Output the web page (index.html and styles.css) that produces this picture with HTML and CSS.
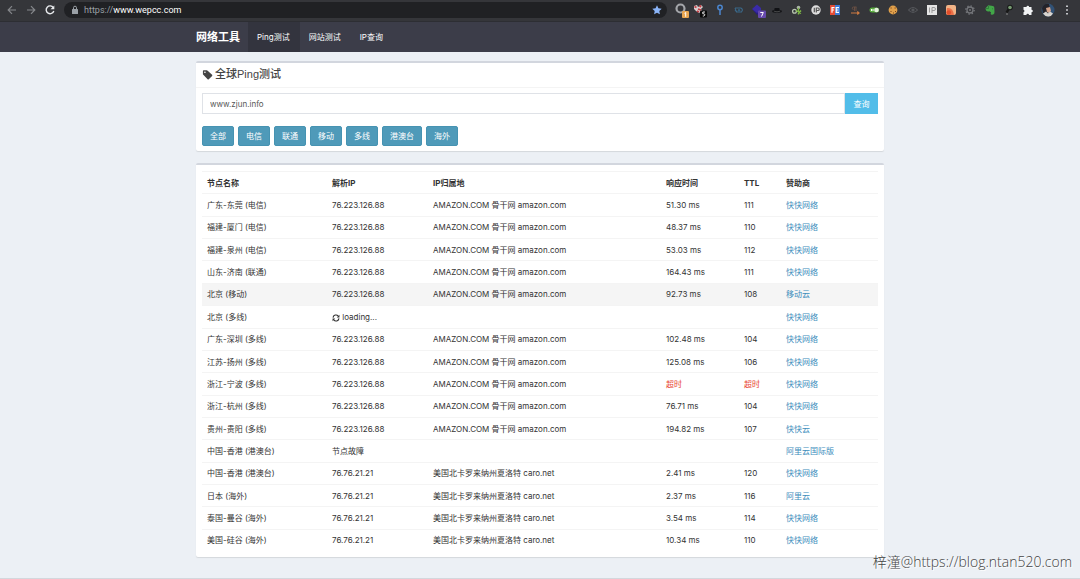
FILE: index.html
```html
<!DOCTYPE html>
<html lang="zh-CN">
<head>
<meta charset="utf-8">
<meta name="viewport" content="width=device-width, initial-scale=1">
<title>全球Ping测试</title>
<link rel="stylesheet" href="styles.css">
</head>
<body>
<div class="browser">
  <div class="browser-nav">
    <button class="tool" aria-label="后退"><svg viewBox="0 0 16 16" class="ico dim"><path d="M12 8H4.500M8 4.200L4.200 8L8 11.800" fill="none" stroke="currentColor" stroke-width="1.200"/></svg></button>
    <button class="tool" aria-label="前进"><svg viewBox="0 0 16 16" class="ico dim"><path d="M4 8h7.500M8 4.200L11.800 8L8 11.800" fill="none" stroke="currentColor" stroke-width="1.200"/></svg></button>
    <button class="tool" aria-label="刷新"><svg viewBox="0 0 16 16" class="ico"><path d="M11.300 5.600A3.900 3.900 0 1 0 11.800 9" fill="none" stroke="currentColor" stroke-width="1.400"/><path d="M12.300 3.500V7.300H8.500z" fill="currentColor"/></svg></button>
  </div>
  <div class="address">
    <svg viewBox="0 0 8 10" class="lock"><rect x="1" y="4" width="6" height="5" rx=".6" fill="currentColor"/><path d="M2.500 4V2.700a1.500 1.500 0 0 1 3 0V4" fill="none" stroke="currentColor"/></svg>
    <span class="url"><span class="scheme">https://</span>www.wepcc.com</span>
    <svg viewBox="0 0 16 16" class="ico star"><path d="M8 3.300l1.400 3 3.300.4-2.400 2.300.6 3.300L8 10.700l-2.900 1.600.6-3.300L3.300 6.700l3.300-.4z" fill="currentColor"/></svg>
  </div>
  <div class="extensions">
    <svg viewBox="0 0 16 16" class="ico"><circle cx="7.500" cy="6.500" r="4" fill="none" stroke="#a4a6aa" stroke-width="2.200"/><rect x="9" y="9" width="7" height="7" rx="1" fill="#e8a550"/><path d="M12.700 14.800v-4.300l-1.200.8" stroke="#fff" fill="none"/></svg>
    <svg viewBox="0 0 16 16" class="ico"><path d="M2 4l3-1 1 2 3-2 2 2-2 2 1 2-3 2-3-2-2-2z" fill="#d8cfd0"/><path d="M2.500 4.500l2 1M6 7l3 1M7.500 3.500L9 5M5 9l2 1" stroke="#c33c43" stroke-width="1.800"/><rect x="8" y="8.500" width="7" height="7" rx="1" fill="#080808"/><path d="M13 10h-2.200v1.800h1q1 .2 1 1t-1 1.200h-1" fill="none" stroke="#fff" stroke-width=".9"/></svg>
    <svg viewBox="0 0 16 16" class="ico"><circle cx="8" cy="5.500" r="2.200" fill="none" stroke="#4b86cf" stroke-width="1.500"/><path d="M8 7.500v5.500" stroke="#4b86cf" stroke-width="1.500"/></svg>
    <svg viewBox="0 0 16 16" class="ico"><path d="M4 6h6l1.500 1.500M4 6l1.500 4h5l1.200-2.500M6 10l-2-2" fill="none" stroke="#3b6888" stroke-width="1.100"/><circle cx="8" cy="8.300" r="1.200" fill="#315d7c"/></svg>
    <svg viewBox="0 0 16 16" class="ico"><path d="M2 7l5-4.500L11 6v5L7 12z" fill="#3a2ba7"/><path d="M2 7l5 4 4-3v3l-4 2z" fill="#281e7c"/><rect x="8" y="8.500" width="8" height="7.500" rx="1" fill="#6649ad"/><path d="M10.300 10.500h3l-1.800 4" fill="none" stroke="#fff"/></svg>
    <svg viewBox="0 0 16 16" class="ico"><ellipse cx="8" cy="9.300" rx="5" ry="1.500" fill="#16171a"/><path d="M5 9l.7-3h4.600L11 9z" fill="#111215"/><path d="M5 9.200q3 1.200 6 0" fill="none" stroke="#666" stroke-width=".6"/></svg>
    <svg viewBox="0 0 16 16" class="ico"><circle cx="9.500" cy="5.500" r="1.800" fill="#a8b3a3"/><circle cx="5.500" cy="9.300" r="1.900" fill="none" stroke="#b8c6b0" stroke-width="1.300"/><path d="M7 8.500l5 3M9.500 6v6.500M12 8.500L9 12" stroke="#80bb45" stroke-width="1.400"/></svg>
    <svg viewBox="0 0 16 16" class="ico"><circle cx="8" cy="8" r="4.700" fill="#dedede"/><path d="M6.300 5.800v4.400M8.300 10.500V6H10a1.200 1.200 0 0 1 0 2.500H8.300" fill="none" stroke="#555" stroke-width="1.200"/></svg>
    <svg viewBox="0 0 16 16" class="ico"><path d="M3 3h5v10H3z" fill="#e54c35"/><path d="M8 3h5v10H8z" fill="#3b7ad9"/><path d="M7.500 5.700H5v5M5 8h2M12 5.700H9.200v4.600H12M9.200 8h2.300" fill="none" stroke="#fff" stroke-width="1.200"/></svg>
    <svg viewBox="0 0 16 16" class="ico"><path d="M9.500 5H6.500a1.200 1.200 0 0 0 0 2.500M7.500 5v4M9 5v4" stroke="#694f43" fill="none"/><path d="M4 11h8M10.300 9.500L12 11l-1.700 1.500" stroke="#cf7b42" stroke-width="1.200" fill="none"/></svg>
    <svg viewBox="0 0 16 16" class="ico"><rect x="3.500" y="5.500" width="9.500" height="5" rx="2.500" fill="#5aae3e"/><circle cx="10.500" cy="8" r="2.300" fill="#e5f1df"/><path d="M5.500 7v2M7 7v2" stroke="#fff"/></svg>
    <svg viewBox="0 0 16 16" class="ico"><circle cx="8" cy="8" r="4.400" fill="#e0a04a"/><path d="M5.500 6h1.200M9.500 6h1.300M10 9.500h1M5.500 9.500h1M8 11h1" stroke="#76421f"/></svg>
    <svg viewBox="0 0 16 16" class="ico"><path d="M3.500 8q4.500-5 9 0q-4.500 5-9 0z" fill="none" stroke="#56585c" stroke-width="1.100"/><circle cx="8" cy="8" r="1.600" fill="#56585c"/></svg>
    <svg viewBox="0 0 16 16" class="ico"><path d="M3 3h10v10H3z" fill="#e4e4e4"/><path d="M5.500 5.500v5M8 11V5.500h2a1.500 1.500 0 0 1 0 3H8" fill="none" stroke="#999"/></svg>
    <svg viewBox="0 0 16 16" class="ico"><rect x="3" y="3" width="10" height="10" rx="2" fill="#f2b487"/><path d="M4 6q6-1 7 7H4q-1-3 0-7z" fill="#ec7048"/><circle cx="5.800" cy="10.500" r="2.300" fill="#e24f2c"/></svg>
    <svg viewBox="0 0 16 16" class="ico"><circle cx="8" cy="8" r="3" fill="none" stroke="#74767a" stroke-width="1.300"/><circle cx="8" cy="8" r="4.200" fill="none" stroke="#74767a" stroke-width="1.300" stroke-dasharray="1.400 1.900"/><circle cx="8" cy="8" r="1" fill="#74767a"/></svg>
    <svg viewBox="0 0 16 16" class="ico"><path d="M3.500 6.200L6.300 3.300l3 .5q3-.1 3 1.800l.2 4.400q0 3-3 2.700-1.700-.5-.4-2.200L7.500 9.300Q3.800 10.200 3.500 6.200z" fill="#42a648"/><path d="M6.500 4v2.500H4M10 6.800h1" stroke="#2d7138" stroke-width=".8" fill="none"/></svg>
    <svg viewBox="0 0 16 16" class="ico"><path d="M5.500 10.500l2-3" stroke="#181818" stroke-width="2.300"/><circle cx="9" cy="5.500" r="2.800" fill="#171a18"/><circle cx="9" cy="5.500" r="1.800" fill="#789b72"/><path d="M5 12h2" stroke="#8b8b8b"/></svg>
    <svg viewBox="0 0 16 16" class="ico"><path d="M3.500 5h3a1.300 1.300 0 1 1 2.600 0h2.400v2.700a1.300 1.300 0 1 1 0 2.600V13H9a1.300 1.300 0 1 0-2.600 0H3.500v-2.800a1.300 1.300 0 0 0 0-2.500z" fill="#f1f3f4"/></svg>
    <svg viewBox="0 0 16 16" class="ico"><circle cx="8" cy="8" r="6.500" fill="#315276"/><path d="M2 6q2-5 7-4l1 5-3 5-4-1z" fill="#242329"/><path d="M6 6l4-1 1 4-2 2-2-1z" fill="#d5a48c"/><path d="M3 11.500l3-2 2 2 2-2 3 2Q11 15 8 14.500q-3 0-5-3z" fill="#d8d4ce"/></svg>
    <svg viewBox="0 0 16 16" class="ico"><path d="M8 3.500v1.600M8 7.200v1.600M8 10.900v1.600" stroke="#e8eaed" stroke-width="1.600"/></svg>
  </div>
</div>
<header class="site-header">
  <nav class="container site-nav">
    <a class="brand" href="#">网络工具</a>
    <a class="nav-link active" href="#">Ping测试</a>
    <a class="nav-link" href="#">网站测试</a>
    <a class="nav-link" href="#">IP查询</a>
  </nav>
</header>
<main class="container content">
  <section class="card">
    <h1 class="card-title"><svg viewBox="0 0 12 12" class="tag"><path d="M1 2.200V5.400q0 .5.4.9l4.700 4.800q.7.600 1.300 0l3.600-3.600q.6-.7 0-1.300L6.200 1.800Q5.800 1.400 5.200 1.400H1.800Q1 1.400 1 2.200zM3.200 2.600a.9.900 0 1 1 0 1.800.9.900 0 0 1 0-1.800z" fill="currentColor" fill-rule="evenodd"/></svg>全球Ping测试</h1>
    <div class="card-body">
      <form class="search">
        <input class="host" type="text" value="www.zjun.info" aria-label="域名或IP">
        <button class="submit" type="button">查询</button>
      </form>
      <div class="filters">
        <button class="filter">全部</button>
        <button class="filter">电信</button>
        <button class="filter">联通</button>
        <button class="filter">移动</button>
        <button class="filter">多线</button>
        <button class="filter">港澳台</button>
        <button class="filter">海外</button>
      </div>
    </div>
  </section>
  <section class="card results">
    <table class="nodes">
      <colgroup><col class="c-name"><col class="c-ip"><col class="c-area"><col class="c-time"><col class="c-ttl"><col></colgroup>
      <tbody>
        <tr><th scope="col">节点名称</th><th scope="col">解析IP</th><th scope="col">IP归属地</th><th scope="col">响应时间</th><th scope="col">TTL</th><th scope="col">赞助商</th></tr>
        <tr><td>广东-东莞 (电信)</td><td>76.223.126.88</td><td>AMAZON.COM 骨干网 amazon.com</td><td>51.30 ms</td><td>111</td><td><a href="#">快快网络</a></td></tr>
        <tr><td>福建-厦门 (电信)</td><td>76.223.126.88</td><td>AMAZON.COM 骨干网 amazon.com</td><td>48.37 ms</td><td>110</td><td><a href="#">快快网络</a></td></tr>
        <tr><td>福建-泉州 (电信)</td><td>76.223.126.88</td><td>AMAZON.COM 骨干网 amazon.com</td><td>53.03 ms</td><td>112</td><td><a href="#">快快网络</a></td></tr>
        <tr><td>山东-济南 (联通)</td><td>76.223.126.88</td><td>AMAZON.COM 骨干网 amazon.com</td><td>164.43 ms</td><td>111</td><td><a href="#">快快网络</a></td></tr>
        <tr class="hovered"><td>北京 (移动)</td><td>76.223.126.88</td><td>AMAZON.COM 骨干网 amazon.com</td><td>92.73 ms</td><td>108</td><td><a href="#">移动云</a></td></tr>
        <tr><td>北京 (多线)</td><td><svg viewBox="0 0 10 10" class="refresh"><path d="M1.300 4.500A3.600 3.600 0 0 1 7.800 2.700M8.700 5.500A3.600 3.600 0 0 1 2.200 7.300" fill="none" stroke="currentColor" stroke-width="1.400"/><path d="M9.300 1v3.300H6zM.7 9V5.700H4z" fill="currentColor"/></svg> loading...</td><td></td><td></td><td></td><td><a href="#">快快网络</a></td></tr>
        <tr><td>广东-深圳 (多线)</td><td>76.223.126.88</td><td>AMAZON.COM 骨干网 amazon.com</td><td>102.48 ms</td><td>104</td><td><a href="#">快快网络</a></td></tr>
        <tr><td>江苏-扬州 (多线)</td><td>76.223.126.88</td><td>AMAZON.COM 骨干网 amazon.com</td><td>125.08 ms</td><td>106</td><td><a href="#">快快网络</a></td></tr>
        <tr><td>浙江-宁波 (多线)</td><td>76.223.126.88</td><td>AMAZON.COM 骨干网 amazon.com</td><td class="timeout">超时</td><td class="timeout">超时</td><td><a href="#">快快网络</a></td></tr>
        <tr><td>浙江-杭州 (多线)</td><td>76.223.126.88</td><td>AMAZON.COM 骨干网 amazon.com</td><td>76.71 ms</td><td>104</td><td><a href="#">快快网络</a></td></tr>
        <tr><td>贵州-贵阳 (多线)</td><td>76.223.126.88</td><td>AMAZON.COM 骨干网 amazon.com</td><td>194.82 ms</td><td>107</td><td><a href="#">快快云</a></td></tr>
        <tr><td>中国-香港 (港澳台)</td><td>节点故障</td><td></td><td></td><td></td><td><a href="#">阿里云国际版</a></td></tr>
        <tr><td>中国-香港 (港澳台)</td><td>76.76.21.21</td><td>美国北卡罗来纳州夏洛特 caro.net</td><td>2.41 ms</td><td>120</td><td><a href="#">快快网络</a></td></tr>
        <tr><td>日本 (海外)</td><td>76.76.21.21</td><td>美国北卡罗来纳州夏洛特 caro.net</td><td>2.37 ms</td><td>116</td><td><a href="#">阿里云</a></td></tr>
        <tr><td>泰国-曼谷 (海外)</td><td>76.76.21.21</td><td>美国北卡罗来纳州夏洛特 caro.net</td><td>3.54 ms</td><td>114</td><td><a href="#">快快网络</a></td></tr>
        <tr><td>美国-硅谷 (海外)</td><td>76.76.21.21</td><td>美国北卡罗来纳州夏洛特 caro.net</td><td>10.34 ms</td><td>110</td><td><a href="#">快快网络</a></td></tr>
      </tbody>
    </table>
  </section>
</main>
<div class="credit">梓潼@https://blog.ntan520.com</div>
</body>
</html>
```
FILE: styles.css
```css
* { box-sizing: border-box; }
body {
  margin: 0;
  min-height: 100vh;
  background: #ecf0f5;
  border-bottom: 1px solid #d3d7dc;
  color: #333;
  font: 8px/12px Inter, "Noto Sans CJK SC", sans-serif;
}
a { color: #3c8dbc; text-decoration: none; }
button, input { font: inherit; border: 0; margin: 0; }
svg { flex: none; }

.browser {
  display: flex;
  align-items: center;
  height: 22px;
  padding: 0 5px 2px 4px;
  background: #35363a;
  border-bottom: 1px solid #2d2e33;
  color: #e8eaed;
}
.browser-nav { display: flex; gap: 3px; }
.tool { padding: 0; background: none; color: inherit; line-height: 0; }
.ico { width: 16px; height: 16px; display: block; }
.dim { color: #85878b; }
.address {
  flex: 1;
  display: flex;
  align-items: center;
  gap: 5px;
  height: 16px;
  margin: 0 6px 0 6px;
  padding: 0 2px 0 7px;
  border-radius: 8px;
  background: #202124;
}
.lock { width: 8px; height: 10px; color: #9aa0a6; }
.url { flex: 1; font: 9px/12px Roboto, sans-serif; color: #fff; }
.scheme { color: #9aa0a6; }
.star { color: #8ab4f8; }
.extensions { display: flex; justify-content: space-between; width: 402px; }

.container { width: 64%; max-width: 688px; margin: 0 auto; }
.site-header { background: #3c3d49; }
.site-nav { display: flex; height: 30px; line-height: 30px; }
.site-nav a { color: #fff; }
.brand { font-size: 11px; font-weight: bold; padding-right: 8px; }
.site-nav .nav-link { padding: 0 10px 0 9px; }
.active { background: #33343e; }

.content { display: flex; flex-direction: column; gap: 12px; padding-top: 9px; }
.card {
  background: #fff;
  border-top: 2px solid #d2d6de;
  border-radius: 2px;
  box-shadow: 0 1px 1px rgba(0, 0, 0, .1);
}
.card-title {
  display: flex;
  align-items: center;
  gap: 2px;
  margin: 0;
  padding: 0 6px 2px;
  height: 25px;
  border-bottom: 1px solid #f4f4f4;
  font: 500 11px/16px "Liberation Sans", "Noto Sans CJK SC", sans-serif;
  color: #444;
}
.tag { width: 11px; height: 11px; }
.card-body { padding: 5px 6px; }
.search { display: flex; margin-bottom: 12px; }
.host { flex: 1; height: 21px; padding: 0 7px; border: 1px solid #dfe2e7; color: #555; }
.submit { width: 33px; background: #52bde9; color: #fff; }
.filters { display: flex; gap: 4px; }
.filter {
  height: 20px;
  padding: 0 7px;
  border: 1px solid #4693b2;
  border-radius: 2px;
  background: #4f9ab9;
  color: #fff;
}

.results { padding: 6px; }
.nodes { width: 100%; height: 380px; table-layout: fixed; border-collapse: collapse; }
.nodes th, .nodes td {
  padding: 0 5px;
  border-top: 1px solid #f4f4f4;
  text-align: left;
  vertical-align: middle;
  white-space: nowrap;
}
.c-name { width: 125px; }
.c-ip { width: 101px; }
.c-area { width: 233px; }
.c-time { width: 78px; }
.c-ttl { width: 42px; }
.hovered { background: #f5f5f5; }
.nodes .timeout { color: #e8432e; }
.refresh { width: 8px; height: 8px; vertical-align: middle; }

.credit {
  position: absolute;
  right: 8px;
  bottom: 7px;
  font: 300 14px/20px "Open Sans", "Noto Sans CJK SC", sans-serif;
  color: #444;
  text-shadow: 1px 1px #fff;
}
```
